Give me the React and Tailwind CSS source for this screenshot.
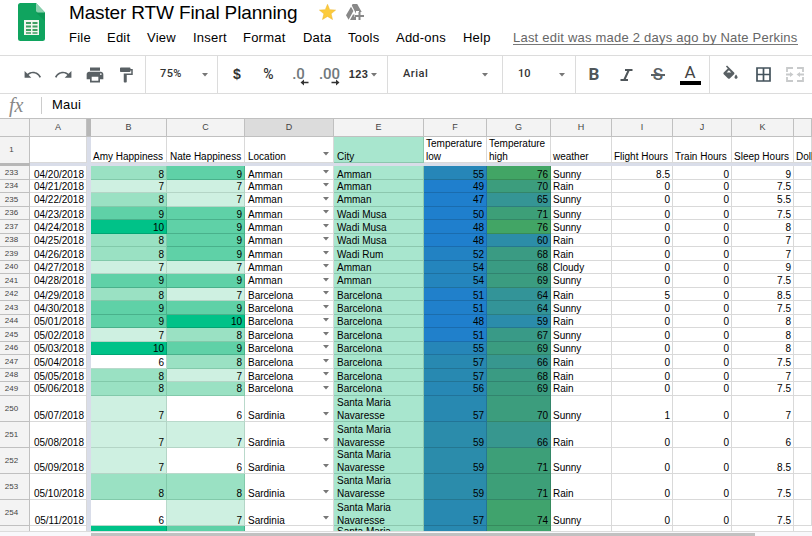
import React from "react";

const happy = {
  6: "bg-white border-[#b9d9cb]",
  7: "bg-[#cef0e1] border-[#b4d5c6]",
  8: "bg-[#9ae1c3] border-[#82c9aa]",
  9: "bg-[#5fd1a7] border-[#49b18b]",
  10: "bg-[#00c288] border-[#00a573]",
};

const heat = {
  47: "bg-[#1f7fcd]", 48: "bg-[#1f7fcd]", 49: "bg-[#1f7fcd]", 50: "bg-[#1f7fcd]", 51: "bg-[#2080cb]",
  52: "bg-[#2282c3]", 54: "bg-[#2485bd]", 55: "bg-[#2686b8]", 56: "bg-[#2788b5]", 57: "bg-[#2889b1]",
  59: "bg-[#2b8cab]", 60: "bg-[#2c8da8]", 64: "bg-[#339498]", 65: "bg-[#359595]", 66: "bg-[#37978f]",
  67: "bg-[#399a87]", 68: "bg-[#3a9b83]", 69: "bg-[#3b9c80]", 70: "bg-[#3c9d7d]", 71: "bg-[#3d9f78]",
  74: "bg-[#40a36d]", 76: "bg-[#42a565]",
};

// n, date, amy, nate, location, city, low, high, weather, flight, train, sleep, height, text drop
const H13 = "h-[13px]", H14 = "h-[14px]", H26 = "h-[26px]";
const P0 = "-mb-[2px]", P1 = "-mb-px", P2 = "mb-0";
const rows = [
  [233, "04/20/2018", 8, 9, "Amman", "Amman", 55, 76, "Sunny", 8.5, 0, 9, H14, P0],
  [234, "04/21/2018", 7, 7, "Amman", "Amman", 49, 70, "Rain", 0, 0, 7.5, H13, P1],
  [235, "04/22/2018", 8, 7, "Amman", "Amman", 47, 65, "Sunny", 0, 0, 5.5, H14, P2],
  [236, "04/23/2018", 9, 9, "Amman", "Wadi Musa", 50, 71, "Sunny", 0, 0, 7.5, H13, P0],
  [237, "04/24/2018", 10, 9, "Amman", "Wadi Musa", 48, 76, "Sunny", 0, 0, 8, H14, P1],
  [238, "04/25/2018", 8, 9, "Amman", "Wadi Musa", 48, 60, "Rain", 0, 0, 7, H13, P1],
  [239, "04/26/2018", 8, 9, "Amman", "Wadi Rum", 52, 68, "Rain", 0, 0, 7, H14, P1],
  [240, "04/27/2018", 7, 7, "Amman", "Amman", 54, 68, "Cloudy", 0, 0, 9, H13, P1],
  [241, "04/28/2018", 9, 9, "Amman", "Amman", 54, 69, "Sunny", 0, 0, 7.5, H14, P2],
  [242, "04/29/2018", 8, 7, "Barcelona", "Barcelona", 51, 64, "Rain", 5, 0, 8.5, H13, P0],
  [243, "04/30/2018", 9, 9, "Barcelona", "Barcelona", 51, 64, "Sunny", 0, 0, 7.5, H14, P1],
  [244, "05/01/2018", 9, 10, "Barcelona", "Barcelona", 48, 59, "Rain", 0, 0, 8, H13, P1],
  [245, "05/02/2018", 7, 8, "Barcelona", "Barcelona", 51, 67, "Sunny", 0, 0, 8, H14, P1],
  [246, "05/03/2018", 10, 9, "Barcelona", "Barcelona", 55, 69, "Sunny", 0, 0, 8, H13, P1],
  [247, "05/04/2018", 6, 8, "Barcelona", "Barcelona", 57, 66, "Rain", 0, 0, 7.5, H14, P1],
  [248, "05/05/2018", 8, 7, "Barcelona", "Barcelona", 57, 68, "Rain", 0, 0, 7, H13, P0],
  [249, "05/06/2018", 8, 8, "Barcelona", "Barcelona", 56, 69, "Rain", 0, 0, 7.5, H14, P2],
  [250, "05/07/2018", 7, 6, "Sardinia", "Santa Maria Navaresse", 57, 70, "Sunny", 1, 0, 7, H26, P1],
  [251, "05/08/2018", 7, 7, "Sardinia", "Santa Maria Navaresse", 59, 66, "Rain", 0, 0, 6, H26, P0],
  [252, "05/09/2018", 7, 6, "Sardinia", "Santa Maria Navaresse", 59, 71, "Sunny", 0, 0, 8.5, H26, P1],
  [253, "05/10/2018", 8, 8, "Sardinia", "Santa Maria Navaresse", 59, 71, "Rain", 0, 0, 7.5, H26, P1],
  [254, "05/11/2018", 6, 7, "Sardinia", "Santa Maria Navaresse", 57, 74, "Sunny", 0, 0, 7.5, H26, P0],
];

const columns = "grid grid-cols-[30px_57px_4px_76px_78px_89px_90px_63px_64px_61px_61px_59px_62px_18px]";
const line = "border-[#d9d9d9]";

function Cell({ className = line, right, pad = "", children }) {
  return (
    <div className={`flex min-w-0 items-end border-r border-b leading-[12px] ${right ? "justify-end pr-[2px] text-right" : "pl-[2px]"} ${className}`}>
      <span className={pad}>{children}</span>
    </div>
  );
}

function Caret({ className = "" }) {
  return (
    <svg className={`shrink-0 ${className}`} width="6" height="4" viewBox="0 0 6 4">
      <path d="M0 0h6L3 3.4z" fill="#777" />
    </svg>
  );
}

function Row({ row }) {
  const [n, date, amy, nate, loc, city, low, high, weather, flight, train, sleep, h, pad] = row;
  return (
    <div className={`${columns} ${h} shrink-0`}>
      <div className="flex items-center justify-center border-r border-b border-[#c0c0c0] bg-[#f3f3f3] pr-[6px] text-[8px] leading-none text-[#444]">{n}</div>
      <Cell right pad={pad}>{date}</Cell>
      <div className="bg-[#d9dde9]" />
      <Cell right pad={pad} className={happy[amy]}>{amy}</Cell>
      <Cell right pad={pad} className={happy[nate]}>{nate}</Cell>
      <div className={`flex items-end justify-between border-r border-b pl-[3px] leading-[12px] ${line}`}>
        <span className={pad}>{loc}</span>
        <Caret className={h === H26 ? "mr-[4px] mb-[5px]" : "mr-[4px] mb-[5px]"} />
      </div>
      <Cell pad={pad} className="border-[#8cc7ae] bg-[#a8e6ce]"><span className="block pl-px leading-[12.5px]">{city}</span></Cell>
      <Cell right pad={pad} className={`border-black/15 ${heat[low]}`}>{low}</Cell>
      <Cell right pad={pad} className={`border-black/15 ${heat[high]}`}>{high}</Cell>
      <Cell pad={pad}>{weather}</Cell>
      <Cell right pad={pad}>{flight}</Cell>
      <Cell right pad={pad}>{train}</Cell>
      <Cell right pad={pad}>{sleep}</Cell>
      <Cell pad={pad} />
    </div>
  );
}

function Icon({ children, size = 20 }) {
  return <svg width={size} height={size} viewBox="0 0 24 24" fill="#596064">{children}</svg>;
}

function Item({ w, className = "", children }) {
  return <div className={`flex h-full shrink-0 items-center justify-center ${w} ${className}`}>{children}</div>;
}

function Toolbar() {
  const group = "flex shrink-0 items-center border-r border-[#dcdcdc]";
  return (
    <div className="flex h-[38px] shrink-0 overflow-hidden border-b border-[#dcdcdc] text-[11px] font-bold text-[#333]">
      <div className={`${group} w-[146px] pl-[16px]`}>
        <Item w="w-[32px]"><Icon size={19}><path d="M12.500 8.500c-2.650 0-5.050.99-6.900 2.600L2 7.500v8.500h8.500l-3.400-3.500c1.500-1.200 3.400-2 5.400-2 3.700 0 7 2.300 8.300 5.500l2-.8C21.200 11.300 17.200 8.500 12.500 8.500z" /></Icon></Item>
        <Item w="w-[31px]"><Icon size={19}><path d="M11.500 8.500c2.650 0 5.050.99 6.900 2.600L22 7.500v8.500h-8.500l3.400-3.500c-1.500-1.200-3.400-2-5.400-2-3.700 0-7 2.300-8.300 5.500l-2-.8C2.800 11.300 6.800 8.500 11.500 8.500z" /></Icon></Item>
        <Item w="w-[31px]"><Icon><path d="M19 8H5c-1.660 0-3 1.340-3 3v6h4v4h12v-4h4v-6c0-1.660-1.340-3-3-3zm-3 11H8v-5h8v5zm3-7c-.55 0-1-.45-1-1s.45-1 1-1 1 .45 1 1-.45 1-1 1zm-1-9H6v4h12V3z" /></Icon></Item>
        <Item w="w-[32px]"><Icon size={18}><path d="M18 4V3c0-.55-.45-1-1-1H5c-.55 0-1 .45-1 1v4c0 .55.45 1 1 1h12c.55 0 1-.45 1-1V6h1v4H9v11c0 .55.45 1 1 1h2c.55 0 1-.45 1-1v-9h8V4h-3z" /></Icon></Item>
      </div>
      <div className={`${group} w-[72px] justify-between pr-[9px] pl-[14px]`}>
        <span className="font-[Roboto] font-medium tracking-[0.4px]">75%</span><Caret />
      </div>
      <div className={`${group} w-[170px] pl-[3px]`}>
        <Item w="w-[32px]" className="text-[14px]">$</Item>
        <Item w="w-[31px]" className="font-[Roboto] text-[14px] font-medium">%</Item>
        <Item w="w-[29px]">
          <span className="relative font-[Roboto] text-[15px] font-medium text-[#70787c]">.0
            <svg className="absolute top-[16px] left-[8px]" width="9" height="7" viewBox="0 0 9 7"><path d="M4 0.500L0.500 3.500L4 6.500V4.200H8.500V2.800H4z" fill="#333" /></svg>
          </span>
        </Item>
        <Item w="w-[33px]">
          <span className="relative font-[Roboto] text-[15px] font-medium text-[#70787c]">.00
            <svg className="absolute top-[16px] left-[12px]" width="9" height="7" viewBox="0 0 9 7"><path d="M5 0.500L8.500 3.500L5 6.500V4.200H0.500V2.800H5z" fill="#333" /></svg>
          </span>
        </Item>
        <Item w="w-[34px]" className="gap-[3px]"><span className="tracking-[0.4px]">123</span><Caret /></Item>
      </div>
      <div className={`${group} w-[115px] justify-between pr-[14px] pl-[15px]`}><span className="font-[Roboto] font-medium tracking-[0.5px]">Arial</span><Caret /></div>
      <div className={`${group} w-[73px] justify-between pr-[10px] pl-[15px]`}><span className="font-[Roboto] font-medium">10</span><Caret /></div>
      <div className={`${group} w-[134px] pl-[2px]`}>
        <Item w="w-[32px]" className="font-[Roboto] text-[17px] text-[#4f565a]">B</Item>
        <Item w="w-[32px]">
          <svg width="13" height="14" viewBox="0 0 13 14" fill="none" stroke="#4f565a" strokeWidth="2"><path d="M5 2H12.500M0.500 12H8M8.800 2L4.200 12" /></svg>
        </Item>
        <Item w="w-[32px]">
          <span className="relative font-[Roboto] text-[17px] font-medium text-[#596064]">S
            <span className="absolute top-[12px] left-[-2px] h-[2px] w-[14px] bg-[#596064]" />
          </span>
        </Item>
        <Item w="w-[32px]" className="flex-col gap-[2px] pt-[1px]">
          <span className="h-[14px] font-[Roboto] text-[17px] leading-[14px] font-normal text-[#444]">A</span>
          <span className="h-[4px] w-[21px] bg-black" />
        </Item>
      </div>
      <div className="flex shrink-0 items-center pl-[4px]">
        <Item w="w-[32px]" className="pb-[4px]"><Icon size={19}><path d="M16.560 8.940L7.620 0 6.210 1.410l2.380 2.380-5.150 5.150c-.59.59-.59 1.540 0 2.120l5.500 5.500c.29.29.68.44 1.060.44s.77-.15 1.060-.44l5.500-5.500c.59-.58.59-1.530 0-2.120zM7 9L10 6 13 9zM19 11.500s-2 2.170-2 3.500c0 1.100.9 2 2 2s2-.9 2-2c0-1.330-2-3.500-2-3.500z" transform="translate(0 3)" /></Icon></Item>
        <Item w="w-[34px]">
          <svg width="15" height="15" viewBox="0 0 15 15" fill="none" stroke="#44535c"><path d="M1 1H14V14H1zM7.500 1V14M1 7.500H14" strokeWidth="1.700" /></svg>
        </Item>
        <Item w="w-[30px]">
          <svg width="18" height="15" viewBox="0 0 18 15" fill="none" stroke="#c8cacb" strokeWidth="1.800">
            <path d="M1 5V1H7M11 1H17V5M1 10V14H7M11 14H17V10M0 7.500H5M18 7.500H13" />
            <path d="M4 5L7.500 7.500L4 10zM14 5L10.500 7.500L14 10z" fill="#c8cacb" stroke="none" />
          </svg>
        </Item>
      </div>
    </div>
  );
}

function Header() {
  return (
    <div className="flex h-[56px] shrink-0 border-b border-[#dcdcdc]">
      <svg className="mt-[3px] ml-[18px] shrink-0" width="27" height="38" viewBox="0 0 27 38">
        <path d="M2.500 0H18l9 9.500V35.500a2.500 2.500 0 0 1-2.500 2.500h-22A2.500 2.500 0 0 1 0 35.500v-33A2.500 2.500 0 0 1 2.500 0z" fill="#10a45f" />
        <path d="M18 9.500H27V18z" fill="#0c9755" />
        <path d="M18 0l9 9.500H20a2 2 0 0 1-2-2z" fill="#8bd1ae" />
        <path d="M6 17h15v15H6z" fill="#f3f6ef" />
        <path d="M8 19h5v2H8zM14.500 19h5v2h-5zM8 22.500h5v2H8zM14.500 22.500h5v2h-5zM8 26h5v2H8zM14.500 26h5v2h-5zM8 29.300h5v1.500H8zM14.500 29.300h5v1.500h-5z" fill="#3f9f63" />
      </svg>
      <div className="ml-[24px] flex flex-col whitespace-nowrap">
        <div className="flex h-[25px] items-center">
          <h1 className="w-[250px] text-[19px] leading-[24px] tracking-[-0.14px]">Master RTW Final Planning</h1>
          <svg className="-mt-[2px] shrink-0" width="17" height="16" viewBox="0 0 17 16"><path d="M8.500 .3L10.700 5.700L16.600 6.100L12.100 9.800L13.500 15.500L8.500 12.400L3.500 15.500L4.900 9.800L.4 6.100L6.300 5.700z" fill="#fccb3c" stroke="#edb52e" strokeWidth=".5" /></svg>
          <svg className="ml-[10px] shrink-0" width="18" height="17" viewBox="0 0 18 17" fill="#888">
            <path d="M6.600 0H11.200L15.700 8H13V7H10V9.800L5.800 1.600zM5 2.800L7.400 7.100L2.600 15.800L0 11.300zM7 10.500H8.500V13H10V16H4z" />
            <path d="M12.500 8h2v3H18v2h-3.500v3h-2v-3H9v-2h3.500z" />
          </svg>
        </div>
        <nav className="flex h-[25px] items-center text-[13px] tracking-[0.22px]">
          <span className="w-[38px]">File</span>
          <span className="w-[40px]">Edit</span>
          <span className="w-[46px]">View</span>
          <span className="w-[50px]">Insert</span>
          <span className="w-[60px]">Format</span>
          <span className="w-[45px]">Data</span>
          <span className="w-[48px]">Tools</span>
          <span className="w-[67px]">Add-ons</span>
          <span className="w-[50px]">Help</span>
          <span className="border-b border-[#777] leading-[13px] text-[#666]">Last edit was made 2 days ago by Nate Perkins</span>
        </nav>
      </div>
    </div>
  );
}

export default function App() {
  const letters = ["A", "", "B", "C", "D", "E", "F", "G", "H", "I", "J", "K", ""];
  const tail = "-mb-px";
  return (
    <div className="flex h-[536px] w-[812px] flex-col overflow-hidden bg-white font-['Liberation_Sans',Arial,sans-serif] text-[10px] text-black">
      <Header />
      <Toolbar />
      <div className="flex h-[24px] shrink-0 items-center pb-[2px]">
        <span className="w-[41px] pl-[9px] font-['Liberation_Serif',serif] text-[20px] leading-none text-[#888] italic">fx</span>
        <span className="h-[17px] w-[11px] border-l border-[#ccc]" />
        <span className="text-[13px] tracking-[0.2px]">Maui</span>
      </div>
      <div className={`${columns} h-[19px] shrink-0 border-t border-[#c0c0c0] text-[9px] text-[#444]`}>
        <div className="border-r border-b border-[#c0c0c0] bg-[#f3f3f3]" />
        {letters.map((l, i) => (
          <div key={i} className={`flex items-center justify-center border-b border-[#c0c0c0] ${i === 1 ? "bg-[#b7b7b7]" : i === 4 ? "border-r bg-[#dcdcdc]" : "border-r bg-[#f3f3f3]"}`}>{l}</div>
        ))}
      </div>
      <div className={`${columns} h-[26px] shrink-0 whitespace-nowrap`}>
        <div className="flex items-center justify-center border-r border-[#c0c0c0] bg-[#f3f3f3] pr-[6px] text-[8px] text-[#444]">1</div>
        <Cell pad={tail} />
        <div className="bg-[#d9dde9]" />
        <Cell pad={tail}>Amy Happiness</Cell>
        <Cell pad={tail}><span className="pl-px">Nate Happiness</span></Cell>
        <div className={`flex items-end justify-between border-r border-b pl-[3px] leading-[12px] ${line}`}><span className={tail}>Location</span><Caret className="mr-[4px] mb-[6px]" /></div>
        <Cell pad={tail} className="border-[#8cc7ae] bg-[#a8e6ce]"><span className="pl-px">City</span></Cell>
        <Cell pad={tail}><span className="block leading-[12.5px]">Temperature<br />low</span></Cell>
        <Cell pad={tail}><span className="block leading-[12.5px]">Temperature<br />high</span></Cell>
        <Cell pad={tail}>weather</Cell>
        <Cell pad={tail}>Flight Hours</Cell>
        <Cell pad={tail}>Train Hours</Cell>
        <Cell pad={tail}>Sleep Hours</Cell>
        <Cell pad={tail}>Dollars</Cell>
      </div>
      <div className="flex h-[3px] shrink-0">
        <div className="w-[30px] bg-[#b7b7b7]" />
        <div className="flex-1 bg-[#d9dde9]" />
      </div>
      {rows.map((r) => <Row key={r[0]} row={r} />)}
      <div className={`${columns} h-[5px] shrink-0 overflow-hidden`}>
        <div className="border-r border-[#c0c0c0] bg-[#f3f3f3]" />
        <div className="border-r border-[#d9d9d9]" />
        <div className="bg-[#d9dde9]" />
        <div className="border-r border-[#00a573] bg-[#00c288]" />
        <div className="border-r border-[#49b18b] bg-[#5fd1a7]" />
        <div className="border-r border-[#d9d9d9]" />
        <div className="h-[5px] overflow-hidden border-r border-[#8cc7ae] bg-[#a8e6ce] pl-[3px] leading-[12px]">Santa Maria Navaresse</div>
        <div className="border-r border-black/15 bg-[#2889b1]" />
        <div className="border-r border-black/15 bg-[#40a36d]" />
        <div className="border-r border-[#d9d9d9]" />
        <div className="border-r border-[#d9d9d9]" />
        <div className="border-r border-[#d9d9d9]" />
        <div className="border-r border-[#d9d9d9]" />
      </div>
      <div className="flex h-[5px] shrink-0 border-t border-[#dcdcdc] bg-[#f8f8fb] pt-px">
        <div className="ml-[91px] h-[3px] w-[664px] bg-[#c1c1c1]" />
      </div>
    </div>
  );
}
